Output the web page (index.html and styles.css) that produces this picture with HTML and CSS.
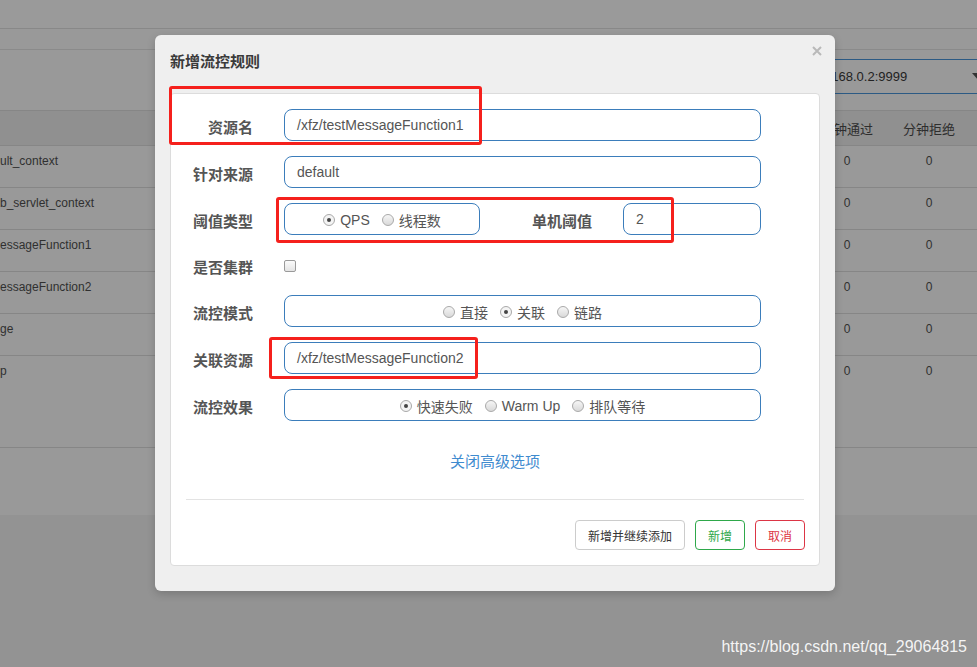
FILE: index.html
```html
<!DOCTYPE html>
<html lang="zh-CN">
<head>
<meta charset="utf-8">
<title>新增流控规则</title>
<link rel="stylesheet" href="styles.css">
</head>
<body>
<div class="page">
  <div class="topbar"></div>
  <div class="subbar"></div>
  <div class="toolbar">
    <div class="select"><span>192.168.0.2:9999</span><span class="caret"></span></div>
  </div>
  <div class="table">
    <div class="tr th">
      <div class="c-name"></div>
      <div class="c-num">分钟通过</div>
      <div class="c-num">分钟拒绝</div>
      <div class="c-end"></div>
    </div>
    <div class="tr">
      <div class="c-name">ult_context</div>
      <div class="c-num">0</div><div class="c-num">0</div><div class="c-end"></div>
    </div>
    <div class="tr">
      <div class="c-name">b_servlet_context</div>
      <div class="c-num">0</div><div class="c-num">0</div><div class="c-end"></div>
    </div>
    <div class="tr">
      <div class="c-name">essageFunction1</div>
      <div class="c-num">0</div><div class="c-num">0</div><div class="c-end"></div>
    </div>
    <div class="tr">
      <div class="c-name">essageFunction2</div>
      <div class="c-num">0</div><div class="c-num">0</div><div class="c-end"></div>
    </div>
    <div class="tr">
      <div class="c-name">ge</div>
      <div class="c-num">0</div><div class="c-num">0</div><div class="c-end"></div>
    </div>
    <div class="tr tall">
      <div class="c-name">p</div>
      <div class="c-num">0</div><div class="c-num">0</div><div class="c-end"></div>
    </div>
  </div>
</div>

<div class="modal">
  <div class="modal-head">
    <div class="modal-title">新增流控规则</div>
    <svg class="close" width="10" height="10" viewBox="0 0 10 10"><path d="M1 1L9 9M9 1L1 9" stroke="#b9b9b9" stroke-width="2" fill="none"/></svg>
  </div>
  <div class="card">
    <div class="row">
      <div class="label">资源名</div>
      <div class="input">/xfz/testMessageFunction1</div>
    </div>
    <div class="row">
      <div class="label">针对来源</div>
      <div class="input">default</div>
    </div>
    <div class="row">
      <div class="label">阈值类型</div>
      <div class="split">
        <div class="input radios narrow">
          <span class="opt"><i class="radio on"></i>QPS</span>
          <span class="opt"><i class="radio"></i>线程数</span>
        </div>
        <div class="label sub">单机阈值</div>
        <div class="input small">2</div>
      </div>
    </div>
    <div class="row short">
      <div class="label">是否集群</div>
      <div><i class="checkbox"></i></div>
    </div>
    <div class="row">
      <div class="label">流控模式</div>
      <div class="input radios">
        <span class="opt"><i class="radio"></i>直接</span>
        <span class="opt"><i class="radio on"></i>关联</span>
        <span class="opt"><i class="radio"></i>链路</span>
      </div>
    </div>
    <div class="row">
      <div class="label">关联资源</div>
      <div class="input">/xfz/testMessageFunction2</div>
    </div>
    <div class="row">
      <div class="label">流控效果</div>
      <div class="input radios">
        <span class="opt"><i class="radio on"></i>快速失败</span>
        <span class="opt"><i class="radio"></i>Warm Up</span>
        <span class="opt"><i class="radio"></i>排队等待</span>
      </div>
    </div>
    <div class="more">关闭高级选项</div>
    <div class="divider"></div>
    <div class="footer">
      <button class="btn">新增并继续添加</button>
      <button class="btn ok">新增</button>
      <button class="btn cancel">取消</button>
    </div>
  </div>
</div>

<div class="mark mark1"></div>
<div class="mark mark2"></div>
<div class="mark mark3"></div>

<div class="watermark">https://blog.csdn.net/qq_29064815</div>
</body>
</html>
```

FILE: styles.css
```css
html, body {
  margin: 0;
  padding: 0;
}
body {
  width: 977px;
  height: 667px;
  overflow: hidden;
  position: relative;
  background: #939393;
  font-family: "Liberation Sans", "Noto Sans CJK SC", sans-serif;
  color: #333;
}

/* background page (under overlay) */
.page {
  height: 515px;
  background: #999999;
  overflow: hidden;
}
.topbar {
  height: 28px;
  background: #9a9a9a;
  border-bottom: 1px solid #888;
}
.subbar {
  height: 20px;
  border-bottom: 1px solid #8a8a8a;
}
.toolbar {
  height: 60px;
  display: flex;
  padding-top: 9px;
  box-sizing: border-box;
}
.select {
  margin-left: 794px;
  width: 200px;
  flex: none;
  height: 35px;
  box-sizing: border-box;
  border-top: 1px solid #2c5a84;
  border-bottom: 1px solid #2c5a84;
  display: flex;
  align-items: center;
  padding-left: 12px;
  font-size: 13px;
  color: #222;
}
.caret {
  margin-left: 65px;
  width: 0;
  height: 0;
  border-left: 6px solid transparent;
  border-right: 6px solid transparent;
  border-top: 7px solid #333;
}
.table {
  border-top: 1px solid #868686;
}
.tr {
  display: flex;
  height: 42px;
  box-sizing: border-box;
  border-bottom: 1px solid #868686;
  font-size: 12px;
  color: #303030;
}
.tr.th {
  height: 35px;
  background: #909090;
  align-items: center;
  font-size: 13px;
  color: #2e2e2e;
}
.tr.tall {
  height: 92px;
}
.tr:not(.th) > div {
  padding-top: 7px;
  line-height: 17px;
}
.c-name {
  width: 806px;
  flex: none;
  white-space: nowrap;
}
.c-num {
  width: 82px;
  flex: none;
  text-align: center;
}
.c-end {
  flex: 1;
}

/* modal */
.modal {
  position: absolute;
  left: 155px;
  top: 35px;
  width: 680px;
  box-sizing: border-box;
  padding: 0 15px 25px 15px;
  background: #efefef;
  border-radius: 6px;
  box-shadow: 0 3px 9px rgba(0, 0, 0, 0.18);
}
.modal-head {
  height: 58px;
  display: flex;
  align-items: flex-start;
  justify-content: space-between;
}
.modal-title {
  margin-top: 17px;
  line-height: 20px;
  font-size: 15px;
  font-weight: bold;
  color: #3a3a3a;
}
.close {
  margin-top: 11px;
  margin-right: -2px;
}
.card {
  background: #fff;
  border: 1px solid #dcdcdc;
  border-radius: 4px;
  padding: 15px 0 15px 0;
}
.row {
  display: grid;
  grid-template-columns: 82px 477px;
  column-gap: 31px;
  align-items: center;
  height: 32px;
  margin-bottom: 15px;
}
.row.short {
  height: 30px;
}
.label {
  text-align: right;
  font-size: 15px;
  font-weight: bold;
  color: #555;
  padding-top: 3px;
  white-space: nowrap;
}
.input {
  height: 32px;
  box-sizing: border-box;
  border: 1px solid #3b7dbb;
  border-radius: 8px;
  padding: 0 12px;
  display: flex;
  align-items: center;
  font-size: 14px;
  color: #555;
}
.radios {
  justify-content: center;
  padding-top: 2px;
}
.split {
  display: flex;
  align-items: center;
}
.input.narrow {
  width: 196px;
  flex: none;
}
.label.sub {
  flex: 1;
  margin-right: 31px;
}
.input.small {
  width: 138px;
  flex: none;
}
.opt {
  display: inline-flex;
  align-items: center;
  margin: 0 6px;
  white-space: nowrap;
}
.radio {
  width: 12px;
  height: 12px;
  box-sizing: border-box;
  border-radius: 50%;
  border: 1px solid #a9a9a9;
  background: linear-gradient(#f6f6f6, #d9d9d9);
  margin-right: 5px;
  display: inline-flex;
  align-items: center;
  justify-content: center;
}
.radio.on {
  background: #f4f4f4;
}
.radio.on::after {
  content: "";
  width: 4px;
  height: 4px;
  border-radius: 50%;
  background: #444;
}
.checkbox {
  display: block;
  width: 12px;
  height: 12px;
  margin-top: 2px;
  box-sizing: border-box;
  border: 1px solid #9a9a9a;
  border-radius: 2px;
  background: linear-gradient(#fbfbfb, #e4e4e4);
}
.more {
  margin-top: 31px;
  text-align: center;
  line-height: 20px;
  font-size: 15px;
  color: #3f8bcf;
}
.divider {
  margin: 27px 15px 0 15px;
  border-top: 1px solid #e3e3e3;
}
.footer {
  margin-top: 20px;
  padding-right: 14px;
  display: flex;
  justify-content: flex-end;
  gap: 10px;
}
.btn {
  height: 30px;
  padding: 0 12px;
  font-family: "Liberation Sans", "Noto Sans CJK SC", sans-serif;
  font-size: 12px;
  background: #fff;
  border: 1px solid #cccccc;
  border-radius: 4px;
  color: #333;
}
.btn.ok {
  border-color: #2ea84a;
  color: #2ea84a;
}
.btn.cancel {
  border-color: #dc3545;
  color: #dc3545;
}

/* annotations */
.mark {
  position: absolute;
  box-sizing: border-box;
  border: 3px solid #f5201c;
  border-radius: 3px;
}
.mark1 { left: 169px; top: 86px; width: 313px; height: 59px; }
.mark2 { left: 276px; top: 197px; width: 398px; height: 46px; }
.mark3 { left: 269px; top: 337px; width: 209px; height: 42px; }

.watermark {
  position: absolute;
  right: 10px;
  top: 637px;
  line-height: 20px;
  font-size: 16px;
  color: rgba(255, 255, 255, 0.92);
}
```
